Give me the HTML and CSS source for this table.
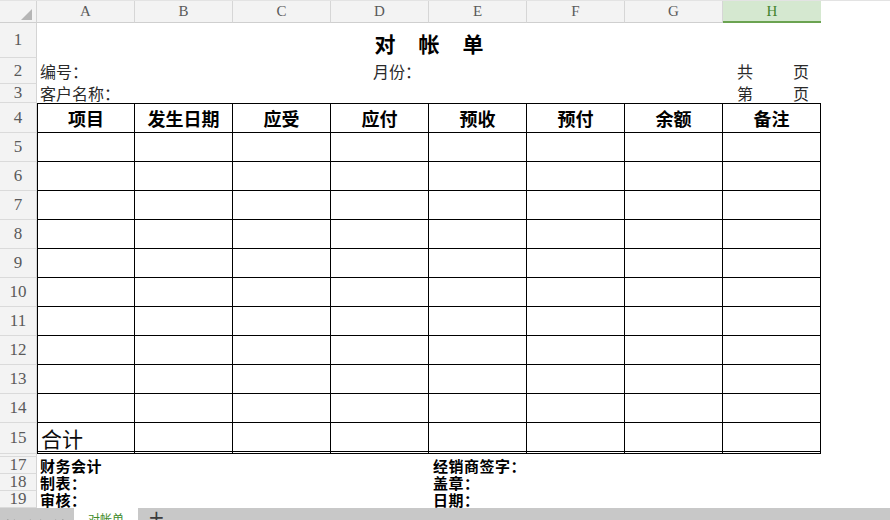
FILE: index.html
```html
<!DOCTYPE html>
<html lang="zh-CN">
<head>
<meta charset="utf-8">
<title>对帐单</title>
<link rel="stylesheet" href="styles.css">
</head>
<body>
<div class="sheet">
  <div class="colhead">
    <div class="corner"><svg class="tri" width="11" height="11" viewBox="0 0 11 11"><polygon points="11,0 11,11 0,11" fill="#b5b5b5"/></svg></div>
    <div class="ch">A</div><div class="ch">B</div><div class="ch">C</div><div class="ch">D</div>
    <div class="ch">E</div><div class="ch">F</div><div class="ch">G</div><div class="ch sel">H</div>
    <div class="chrest"></div>
  </div>

  <div class="row r1">
    <div class="rh">1</div>
    <div class="rc"><div class="title"><span>对</span><span>帐</span><span>单</span></div></div>
  </div>
  <div class="row r2">
    <div class="rh">2</div>
    <div class="rc">
      <div class="tx c1">编号：</div>
      <div class="tx c4 month">月份：</div>
      <div class="tx c8 page"><span>共</span><span>页</span></div>
    </div>
  </div>
  <div class="row r3">
    <div class="rh">3</div>
    <div class="rc">
      <div class="tx span3">客户名称：</div>
      <div class="tx c8 page"><span>第</span><span>页</span></div>
    </div>
  </div>

  <div class="row r4 trow">
    <div class="rh">4</div>
    <div class="c hd">项目</div><div class="c hd">发生日期</div><div class="c hd">应受</div><div class="c hd">应付</div>
    <div class="c hd">预收</div><div class="c hd">预付</div><div class="c hd">余额</div><div class="c hd">备注</div>
  </div>
  <div class="row rd trow"><div class="rh">5</div><div class="c"></div><div class="c"></div><div class="c"></div><div class="c"></div><div class="c"></div><div class="c"></div><div class="c"></div><div class="c"></div></div>
  <div class="row rd trow"><div class="rh">6</div><div class="c"></div><div class="c"></div><div class="c"></div><div class="c"></div><div class="c"></div><div class="c"></div><div class="c"></div><div class="c"></div></div>
  <div class="row rd trow"><div class="rh">7</div><div class="c"></div><div class="c"></div><div class="c"></div><div class="c"></div><div class="c"></div><div class="c"></div><div class="c"></div><div class="c"></div></div>
  <div class="row rd trow"><div class="rh">8</div><div class="c"></div><div class="c"></div><div class="c"></div><div class="c"></div><div class="c"></div><div class="c"></div><div class="c"></div><div class="c"></div></div>
  <div class="row rd trow"><div class="rh">9</div><div class="c"></div><div class="c"></div><div class="c"></div><div class="c"></div><div class="c"></div><div class="c"></div><div class="c"></div><div class="c"></div></div>
  <div class="row rd trow"><div class="rh">10</div><div class="c"></div><div class="c"></div><div class="c"></div><div class="c"></div><div class="c"></div><div class="c"></div><div class="c"></div><div class="c"></div></div>
  <div class="row rd trow"><div class="rh">11</div><div class="c"></div><div class="c"></div><div class="c"></div><div class="c"></div><div class="c"></div><div class="c"></div><div class="c"></div><div class="c"></div></div>
  <div class="row rd trow"><div class="rh">12</div><div class="c"></div><div class="c"></div><div class="c"></div><div class="c"></div><div class="c"></div><div class="c"></div><div class="c"></div><div class="c"></div></div>
  <div class="row rd trow"><div class="rh">13</div><div class="c"></div><div class="c"></div><div class="c"></div><div class="c"></div><div class="c"></div><div class="c"></div><div class="c"></div><div class="c"></div></div>
  <div class="row rd trow"><div class="rh">14</div><div class="c"></div><div class="c"></div><div class="c"></div><div class="c"></div><div class="c"></div><div class="c"></div><div class="c"></div><div class="c"></div></div>
  <div class="row r15 trow"><div class="rh">15</div><div class="c total">合计</div><div class="c"></div><div class="c"></div><div class="c"></div><div class="c"></div><div class="c"></div><div class="c"></div><div class="c"></div></div>

  <div class="row r16"><div class="rh"></div></div>
  <div class="row rf"><div class="rh">17</div><div class="rc"><div class="ft fl">财务会计</div><div class="ft fr">经销商签字：</div></div></div>
  <div class="row rf"><div class="rh">18</div><div class="rc"><div class="ft fl">制表：</div><div class="ft fr">盖章：</div></div></div>
  <div class="row rf"><div class="rh">19</div><div class="rc"><div class="ft fl">审核：</div><div class="ft fr">日期：</div></div></div>

  <div class="tabs">
    <div class="nav">
      <svg width="70" height="14" viewBox="0 0 70 14">
        <rect x="7" y="6" width="1.5" height="8" fill="#a9a9a9"/>
        <polygon points="15,6 9,10 15,14" fill="#a9a9a9"/>
        <polygon points="31,6 25,10 31,14" fill="#a9a9a9"/>
        <polygon points="40,6 46,10 40,14" fill="#a9a9a9"/>
        <polygon points="55,6 61,10 55,14" fill="#a9a9a9"/>
        <rect x="62" y="6" width="1.5" height="8" fill="#a9a9a9"/>
      </svg>
    </div>
    <div class="tab">对帐单</div>
    <div class="add">+</div>
  </div>
</div>
</body>
</html>
```

FILE: styles.css
```css
html, body {
  margin: 0;
  padding: 0;
  width: 890px;
  height: 520px;
  overflow: hidden;
  background: #fff;
  font-family: "Noto Sans CJK SC", "Noto Sans", sans-serif;
}

.sheet {
  display: flex;
  flex-direction: column;
  width: 890px;
}

.colhead {
  display: flex;
  height: 23px;
  box-sizing: border-box;
  border-top: 1px solid #e3e3e3;
  flex-shrink: 0;
}

.corner {
  width: 37px;
  box-sizing: border-box;
  background: #f3f3f3;
  border-right: 1px solid #d4d4d4;
  border-bottom: 1px solid #cfcfcf;
  display: flex;
  justify-content: flex-end;
  align-items: flex-end;
  padding: 0 4px 2px 0;
}

.ch {
  width: 98px;
  box-sizing: border-box;
  background: #f3f3f3;
  border-right: 1px solid #d6d6d6;
  border-bottom: 1px solid #cfcfcf;
  color: #5a5a5a;
  font-family: "Liberation Serif", serif;
  font-size: 15px;
  line-height: 21px;
  text-align: center;
}

.ch.sel {
  background: #d5e8d0;
  color: #43852f;
  border-right: none;
  border-bottom: 2px solid #6ba351;
  line-height: 20px;
}

.chrest {
  flex: 1;
  background: #fff;
}

.row {
  display: flex;
  flex-shrink: 0;
}

.rh {
  width: 37px;
  flex-shrink: 0;
  box-sizing: border-box;
  background: #f3f3f3;
  border-right: 1px solid #d4d4d4;
  border-bottom: 1px solid #dadada;
  color: #5a5a5a;
  font-family: "Liberation Serif", serif;
  font-size: 17px;
  display: flex;
  align-items: center;
  justify-content: center;
  overflow: hidden;
}

.r1 { height: 35px; }
.r2 { height: 26px; }
.r3 { height: 19px; }
.r4 { height: 30px; }
.rd { height: 29px; }
.r15 { height: 31px; }
.r16 { height: 3px; }
.rf { height: 17px; }

.rc {
  width: 784px;
  display: grid;
  grid-template-columns: repeat(8, 98px);
  align-items: end;
}

.title {
  grid-column: 1 / 9;
  display: flex;
  justify-content: center;
  gap: 23px;
  font-size: 21px;
  font-weight: 700;
  color: #000;
  line-height: 24px;
  padding-bottom: 3px;
}

.tx {
  font-size: 16px;
  line-height: 20px;
  color: #2a2a2a;
  padding-left: 3px;
  white-space: nowrap;
}

.r2 .tx { padding-bottom: 3px; }
.r3 .tx { line-height: 18px; padding-bottom: 1px; }

.c1 { grid-column: 1; }
.span3 { grid-column: 1 / 4; }
.c4 { grid-column: 4; }
.c8 { grid-column: 8; }

.month { padding-left: 42px; }

.page {
  display: flex;
  justify-content: space-between;
  padding-left: 14px;
  padding-right: 12px;
}

/* table cells */
.c {
  width: 98px;
  flex-shrink: 0;
  box-sizing: border-box;
  border-right: 1px solid #000;
  border-bottom: 1px solid #000;
}

.trow .rh + .c {
  border-left: 1px solid #000;
}

.r4 .c {
  border-top: 1px solid #000;
}

.hd {
  display: flex;
  align-items: center;
  justify-content: center;
  font-size: 18px;
  font-weight: 700;
  color: #000;
}

.r15 .c {
  border-bottom: 3px double #000;
}

.total {
  display: flex;
  align-items: flex-end;
  font-size: 21px;
  line-height: 24px;
  padding-left: 3px;
  padding-bottom: 1px;
  color: #0c0c0c;
}

.rf .rc {
  align-items: center;
}

.ft {
  font-size: 15px;
  font-weight: 700;
  line-height: 17px;
  color: #000;
  letter-spacing: 0.5px;
  white-space: nowrap;
}

.fl {
  grid-column: 1 / 5;
  padding-left: 3px;
}

.fr {
  grid-column: 5 / 9;
  padding-left: 4px;
}

/* sheet tabs */
.tabs {
  display: flex;
  align-items: flex-start;
  height: 30px;
  background: #c8c8c8;
  flex-shrink: 0;
}

.nav {
  width: 74px;
  height: 30px;
}

.tab {
  width: 64px;
  height: 30px;
  background: #fff;
  color: #3f8b2a;
  font-size: 12px;
  line-height: 14px;
  text-align: center;
  padding-top: 4px;
  box-sizing: border-box;
}

.add {
  margin-left: 10px;
  color: #3c3c3c;
  font-family: "DejaVu Sans", sans-serif;
  font-size: 20px;
  line-height: 20px;
  margin-top: -1px;
}
```
